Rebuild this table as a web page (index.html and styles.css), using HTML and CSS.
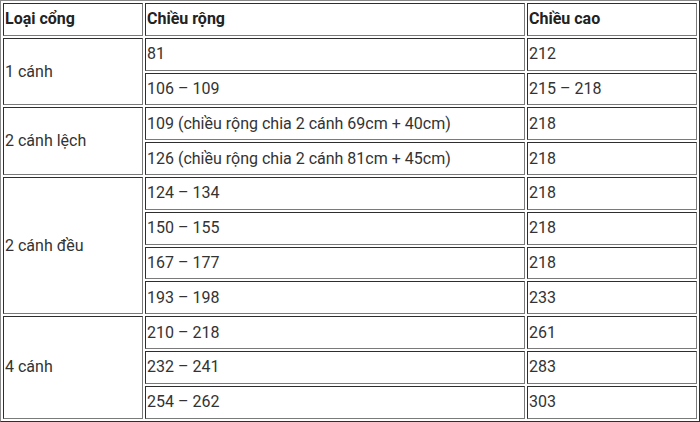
FILE: index.html
```html
<!DOCTYPE html>
<html>
<head>
<meta charset="utf-8">
<link rel="stylesheet" href="styles.css">
</head>
<body>
<table class="sizes">
  <thead>
    <tr><th class="c1">Loại cổng</th><th class="c2">Chiều rộng</th><th class="c3">Chiều cao</th></tr>
  </thead>
  <tbody>
    <tr><td rowspan="2">1 cánh</td><td>81</td><td>212</td></tr>
    <tr><td>106 – 109</td><td>215 – 218</td></tr>
    <tr><td rowspan="2">2 cánh lệch</td><td>109 (chiều rộng chia 2 cánh 69cm + 40cm)</td><td>218</td></tr>
    <tr><td>126 (chiều rộng chia 2 cánh 81cm + 45cm)</td><td>218</td></tr>
    <tr><td rowspan="4">2 cánh đều</td><td>124 – 134</td><td>218</td></tr>
    <tr><td>150 – 155</td><td>218</td></tr>
    <tr><td>167 – 177</td><td>218</td></tr>
    <tr><td>193 – 198</td><td>233</td></tr>
    <tr><td rowspan="3">4 cánh</td><td>210 – 218</td><td>261</td></tr>
    <tr><td>232 – 241</td><td>283</td></tr>
    <tr><td>254 – 262</td><td>303</td></tr>
  </tbody>
</table>
</body>
</html>
```
FILE: styles.css
```css
html, body {
  margin: 0;
  padding: 0;
  background: #ffffff;
}
.sizes {
  width: 700px;
  table-layout: fixed;
  border-collapse: separate;
  border-spacing: 2px;
  border: 1px solid;
  border-color: #8a8a8a #2e2e2e #2e2e2e #8a8a8a;
  font-family: Roboto, "Noto Sans", sans-serif;
  font-size: 16px;
  color: #333333;
}
.sizes th,
.sizes td {
  box-sizing: content-box;
  height: 30.8px;
  padding: 0 1px;
  border: 1px solid;
  border-color: #2e2e2e #7a7a7a #7a7a7a #2e2e2e;
  text-align: left;
  vertical-align: middle;
  line-height: 18px;
  font-weight: 400;
}
.sizes th {
  font-weight: 700;
  color: #222222;
}
.sizes .c1 { width: 136px; }
.sizes .c2 { width: 376px; }
.sizes .c3 { width: auto; }
```
